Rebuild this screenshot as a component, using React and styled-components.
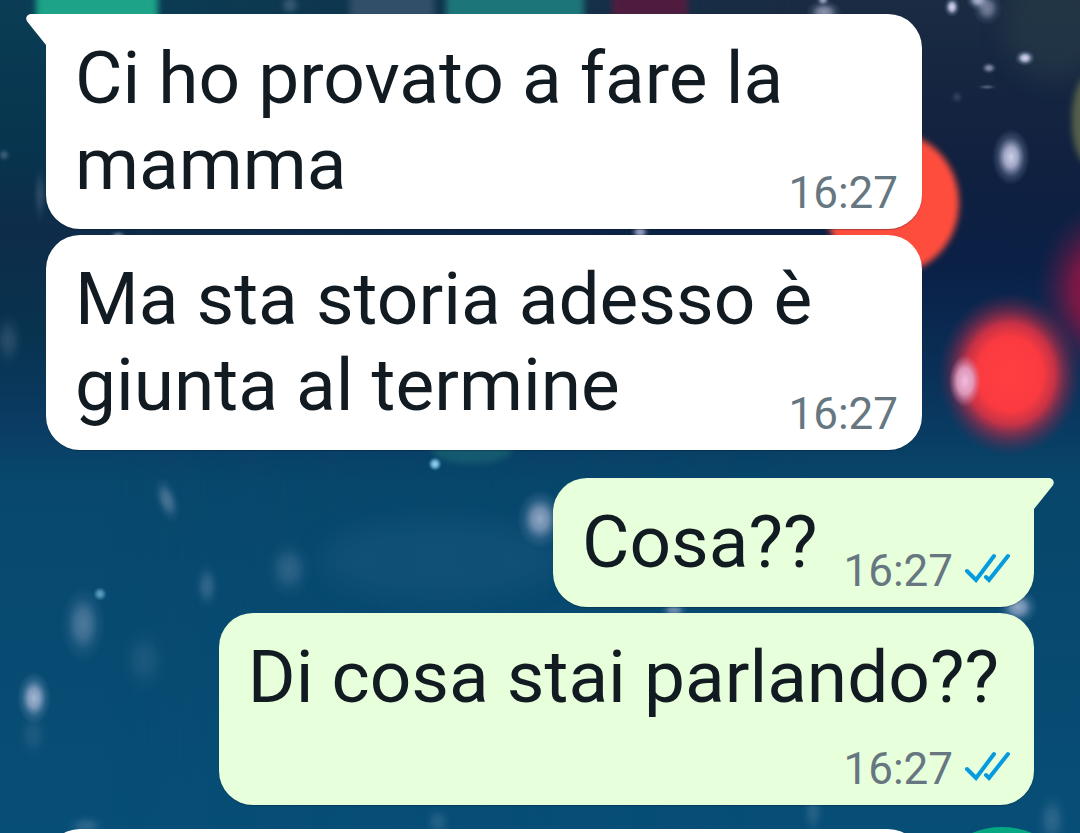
import styled, { createGlobalStyle } from 'styled-components';

const GlobalStyle = createGlobalStyle`
  * {
    box-sizing: border-box;
  }
  body {
    margin: 0;
    background: #074c74;
    font-family: Roboto, 'Noto Sans', sans-serif;
  }
`;

const Screen = styled.div`
  position: relative;
  height: 100vh;
  overflow: hidden;
`;

/* wallpaper that lies behind the conversation */
const WallpaperSvg = styled.svg`
  position: absolute;
  inset: 0;
  width: 100%;
  height: 100%;
`;

const Chat = styled.main`
  position: relative;
  display: flex;
  flex-direction: column;
  gap: 28px;
  padding: 14px 46px 0;
`;

const Group = styled.section`
  display: flex;
  flex-direction: column;
  align-items: ${({ $out }) => ($out ? 'flex-end' : 'flex-start')};
  gap: 6px;
`;

const Bubble = styled.article`
  position: relative;
  display: flow-root;
  max-width: calc(100% - 112px);
  padding: 21px 24px 10px 29px;
  border-radius: 34px;
  border-top-left-radius: ${({ $tail, $out }) => ($tail && !$out ? 0 : 34)}px;
  border-top-right-radius: ${({ $tail, $out }) => ($tail && $out ? 0 : 34)}px;
  background: ${({ $out }) => ($out ? '#e7ffdb' : '#ffffff')};
  box-shadow: 0 1px 1px rgba(0, 20, 40, 0.3);
`;

const Tail = styled.svg`
  position: absolute;
  top: 0;
  ${({ $out }) => ($out ? 'left: 100%; margin-left: -1px;' : 'right: 100%; margin-right: -1px; transform: scaleX(-1);')}
  width: 22px;
  height: 34px;
  fill: ${({ $out }) => ($out ? '#e7ffdb' : '#ffffff')};
`;

const Text = styled.span`
  display: ${({ $below }) => ($below ? 'block' : 'inline')};
  padding-right: ${({ $below }) => ($below ? 11 : 0)}px;
  color: #111b21;
  font-size: 73px;
  line-height: 86px;
`;

/* floats beside the last line, or under it when the line is full */
const Meta = styled.span`
  float: right;
  display: flex;
  align-items: center;
  gap: 11px;
  margin-top: ${({ $below }) => ($below ? 23 : 46)}px;
  margin-left: 26px;
  color: #667781;
  font-size: 44px;
  line-height: 52px;
`;

const Checks = styled.svg`
  width: 46px;
  height: 30px;
  margin-bottom: 6px;
  fill: none;
  stroke: #069adf;
  stroke-width: 4;
  stroke-linecap: round;
`;

const NextBubble = styled.div`
  width: calc(100% - 112px);
  height: 128px;
  margin-top: -4px;
  border-radius: 34px;
  background: #ffffff;
`;

const MicButton = styled.button`
  position: absolute;
  right: 0;
  bottom: -150px;
  width: 156px;
  height: 156px;
  border: 0;
  border-radius: 50%;
  background: #06a884;
`;

const snow = [
  { x: 1011, y: 157, rx: 19, ry: 28, o: 0.95 },
  { x: 952, y: 7, rx: 8, ry: 10, o: 1 },
  { x: 978, y: 0, rx: 12, ry: 10, o: 0.8 },
  { x: 987, y: 8, rx: 15, ry: 17, o: 0.5 },
  { x: 1025, y: 58, rx: 10, ry: 8, o: 1 },
  { x: 989, y: 68, rx: 8, ry: 6, o: 0.6 },
  { x: 987, y: 87, rx: 10, ry: 3, o: 0.3 },
  { x: 957, y: 97, rx: 7, ry: 7, o: 0.15 },
  { x: 824, y: 12, rx: 18, ry: 12, o: 0.6 },
  { x: 823, y: 0, rx: 7, ry: 6, o: 0.7 },
  { x: 640, y: 232, rx: 10, ry: 8, o: 0.7 },
  { x: 118, y: 236, rx: 9, ry: 6, o: 0.5 },
  { x: 290, y: 5, rx: 12, ry: 12, o: 0.2 },
  { x: 4, y: 155, rx: 7, ry: 7, o: 0.25 },
  { x: 40, y: 195, rx: 8, ry: 30, o: 0.15 },
  { x: 8, y: 340, rx: 16, ry: 28, o: 0.15 },
  { x: 435, y: 464, rx: 7, ry: 7, o: 0.95, c: 'ice' },
  { x: 540, y: 519, rx: 23, ry: 29, o: 0.65 },
  { x: 167, y: 500, rx: 12, ry: 24, o: 0.3, r: -18 },
  { x: 289, y: 569, rx: 24, ry: 30, o: 0.18 },
  { x: 207, y: 586, rx: 13, ry: 24, o: 0.2 },
  { x: 100, y: 594, rx: 7, ry: 7, o: 0.6, c: 'ice' },
  { x: 83, y: 624, rx: 22, ry: 38, o: 0.33 },
  { x: 34, y: 698, rx: 17, ry: 26, o: 0.75 },
  { x: 144, y: 660, rx: 24, ry: 34, o: 0.1 },
  { x: 33, y: 735, rx: 16, ry: 24, o: 0.1 },
  { x: 1018, y: 607, rx: 20, ry: 18, o: 0.65 },
  { x: 674, y: 610, rx: 14, ry: 8, o: 0.5 },
  { x: 1052, y: 820, rx: 16, ry: 28, o: 0.18 },
  { x: 813, y: 812, rx: 12, ry: 24, o: 0.14 },
  { x: 438, y: 822, rx: 14, ry: 16, o: 0.14 },
  { x: 86, y: 826, rx: 20, ry: 12, o: 0.18 },
];

const Wallpaper = () => (
  <WallpaperSvg viewBox="0 0 1080 833" preserveAspectRatio="xMidYMid slice" aria-hidden="true">
    <defs>
      <linearGradient id="sky" x1="0" y1="0" x2="0" y2="1">
        <stop offset="0" stopColor="#0a3d55" />
        <stop offset="0.18" stopColor="#07344e" />
        <stop offset="0.28" stopColor="#0e2c49" />
        <stop offset="0.4" stopColor="#07334f" />
        <stop offset="0.5" stopColor="#0b3a62" />
        <stop offset="0.58" stopColor="#08486e" />
        <stop offset="1" stopColor="#074e76" />
      </linearGradient>
      <linearGradient id="night" x1="0" y1="0" x2="0" y2="1">
        <stop offset="0" stopColor="#1a2b42" />
        <stop offset="0.2" stopColor="#10203f" />
        <stop offset="0.32" stopColor="#0a2046" />
        <stop offset="0.45" stopColor="#0a3058" />
        <stop offset="0.58" stopColor="#08466b" />
        <stop offset="1" stopColor="#074e76" />
      </linearGradient>
      <linearGradient id="fade">
        <stop offset="0.1" stopColor="#000" />
        <stop offset="0.75" stopColor="#fff" />
      </linearGradient>
      <mask id="right">
        <rect width="1080" height="833" fill="url(#fade)" />
      </mask>
      <radialGradient id="flake">
        <stop offset="0" stopColor="#d8daf2" />
        <stop offset="0.35" stopColor="#c2c6e4" stopOpacity="0.85" />
        <stop offset="0.7" stopColor="#a5b4d8" stopOpacity="0.25" />
        <stop offset="1" stopColor="#a5b4d8" stopOpacity="0" />
      </radialGradient>
      <radialGradient id="ice">
        <stop offset="0" stopColor="#a9e2f8" />
        <stop offset="0.45" stopColor="#7cc3e6" stopOpacity="0.85" />
        <stop offset="1" stopColor="#4b9cc8" stopOpacity="0" />
      </radialGradient>
      <radialGradient id="glint">
        <stop offset="0" stopColor="#f0bcdc" />
        <stop offset="0.5" stopColor="#e6a8cc" stopOpacity="0.85" />
        <stop offset="1" stopColor="#d080a8" stopOpacity="0" />
      </radialGradient>
      <radialGradient id="red">
        <stop offset="0" stopColor="#ff4040" />
        <stop offset="0.45" stopColor="#fa3a40" />
        <stop offset="0.62" stopColor="#dc3244" stopOpacity="0.9" />
        <stop offset="0.8" stopColor="#96294a" stopOpacity="0.5" />
        <stop offset="1" stopColor="#5a2450" stopOpacity="0" />
      </radialGradient>
      <radialGradient id="crimson">
        <stop offset="0" stopColor="#b01445" />
        <stop offset="0.5" stopColor="#8c1644" stopOpacity="0.8" />
        <stop offset="1" stopColor="#4a1c48" stopOpacity="0" />
      </radialGradient>
      <filter id="soft" x="-20%" y="-20%" width="140%" height="140%">
        <feGaussianBlur stdDeviation="3" />
      </filter>
      <filter id="softer" x="-50%" y="-50%" width="200%" height="200%">
        <feGaussianBlur stdDeviation="12" />
      </filter>
    </defs>
    <rect width="1080" height="833" fill="url(#sky)" />
    <rect width="1080" height="833" fill="url(#night)" mask="url(#right)" />
    <ellipse cx="1055" cy="25" rx="50" ry="55" fill="#2b3f48" opacity="0.5" filter="url(#softer)" />
    <rect x="36" y="-40" width="122" height="68" fill="#1fa388" filter="url(#soft)" />
    <rect x="350" y="-20" width="84" height="38" fill="#33506a" filter="url(#soft)" />
    <rect x="446" y="-30" width="138" height="52" fill="#1f7478" filter="url(#soft)" />
    <rect x="612" y="-20" width="76" height="38" fill="#4f1d3f" filter="url(#soft)" />
    <ellipse cx="892" cy="203" rx="67" ry="71" fill="#ff4e3c" filter="url(#soft)" />
    <ellipse cx="1110" cy="290" rx="75" ry="90" fill="url(#crimson)" />
    <ellipse cx="1010" cy="374" rx="72" ry="82" fill="url(#red)" />
    <ellipse cx="965" cy="381" rx="16" ry="26" fill="url(#glint)" />
    <ellipse cx="1088" cy="120" rx="16" ry="44" fill="#56604a" filter="url(#soft)" />
    <ellipse cx="472" cy="450" rx="40" ry="14" fill="#1d6a74" opacity="0.6" filter="url(#soft)" />
    <ellipse cx="440" cy="560" rx="120" ry="40" fill="#1c5a82" opacity="0.4" filter="url(#softer)" />
    {snow.map(({ x, y, rx, ry, o, r = 0, c = 'flake' }) => (
      <ellipse
        key={`${x}-${y}`}
        cx={x}
        cy={y}
        rx={rx}
        ry={ry}
        opacity={o}
        fill={`url(#${c})`}
        transform={`rotate(${r} ${x} ${y})`}
      />
    ))}
  </WallpaperSvg>
);

const Message = ({ text, time, out, tail, below }) => (
  <Bubble $out={out} $tail={tail}>
    {tail && (
      <Tail $out={out} viewBox="0 0 22 34" aria-hidden="true">
        <path d="M0 0H15C20.500 0 22.500 4.500 19 8.500L1 31V34H0Z" />
      </Tail>
    )}
    <Text $below={below}>{text}</Text>
    <Meta $below={below}>
      <time>{time}</time>
      {out && (
        <Checks viewBox="0 0 46 30" role="img" aria-label="Letto">
          <path d="M3 18L12 27L30 3M22 24L25 27L44 3" />
        </Checks>
      )}
    </Meta>
  </Bubble>
);

const App = () => (
  <>
    <GlobalStyle />
    <Screen>
      <Wallpaper />
      <Chat>
        <Group>
          <Message text="Ci ho provato a fare la mamma" time="16:27" tail />
          <Message text="Ma sta storia adesso è giunta al termine" time="16:27" />
        </Group>
        <Group $out>
          <Message text="Cosa??" time="16:27" out tail />
          <Message text="Di cosa stai parlando??" time="16:27" out below />
        </Group>
        <NextBubble />
      </Chat>
      <MicButton type="button" aria-label="Messaggio vocale" />
    </Screen>
  </>
);

export default App;
